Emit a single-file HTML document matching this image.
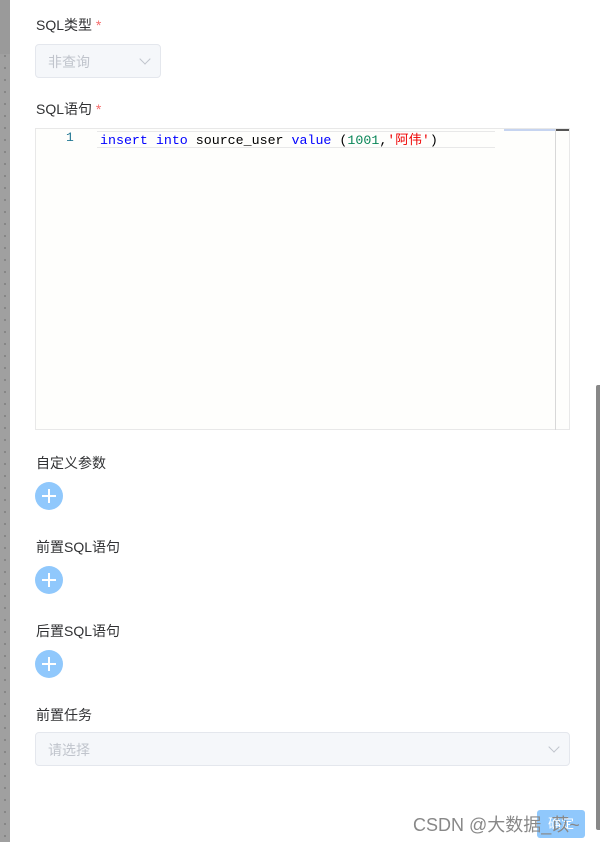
<!DOCTYPE html>
<html><head><meta charset="utf-8"><style>
body{margin:0;width:600px;height:842px;overflow:hidden;background:#fff;font-family:"Liberation Sans","Noto Sans CJK SC",sans-serif;position:relative}
.left{position:absolute;left:0;top:0;width:10px;height:842px;background:#a0a0a0;background-image:radial-gradient(#666 0.6px,transparent 0.8px);background-size:10px 12px;background-position:0 2px}
.left .top{position:absolute;left:0;top:0;width:10px;height:54px;background:#9a9a9a}
.lbl{position:absolute;left:36px;font-size:14px;color:#303133}
.req{color:#f56c6c}
.sel{position:absolute;border:1px solid #e4e7ed;background:#f5f7fa;border-radius:4px;box-sizing:border-box;color:#c0c4cc;font-size:14px}
.plus{position:absolute;left:35px;width:28px;height:28px;border-radius:50%;background:#90c8fc}
.plus:before{content:"";position:absolute;left:7px;top:13px;width:14px;height:2px;background:#fff}
.plus:after{content:"";position:absolute;left:13px;top:7px;width:2px;height:14px;background:#fff}
.chev{position:absolute;width:7px;height:7px;border-right:1px solid #c0c4cc;border-bottom:1px solid #c0c4cc;transform:rotate(45deg)}
</style></head><body>
<div class="left"><div class="top"></div></div>
<div class="lbl" style="top:15px">SQL类型 <span class="req">*</span></div>
<div class="sel" style="left:35px;top:44px;width:126px;height:34px"><span style="position:absolute;left:12px;top:7px">非查询</span><div class="chev" style="left:105px;top:10px"></div></div>
<div class="lbl" style="top:99px">SQL语句 <span class="req">*</span></div>
<div style="position:absolute;left:35px;top:128px;width:535px;height:302px;border:1px solid #e8e8e8;box-sizing:border-box;background:#fefefc">
 <div style="position:absolute;left:61px;top:2px;width:398px;height:1px;background:#e8e8e8"></div>
 <div style="position:absolute;left:61px;top:18px;width:398px;height:1px;background:#e8e8e8"></div>
 <div style="position:absolute;left:468px;top:0;width:52px;height:2px;background:#c6d4f0"></div>
 <div style="position:absolute;left:519px;top:0;width:1px;height:301px;background:#d8d8d8"></div>
 <div style="position:absolute;left:520px;top:0;width:13px;height:2px;background:#555"></div>
 <div style="position:absolute;left:30px;top:1px;font:13px 'Liberation Mono',monospace;color:#237893">1</div>
 <div style="position:absolute;left:64px;top:0px;font:13.3px 'Liberation Mono','Noto Sans CJK SC',monospace;white-space:pre;color:#000"><span style="color:#00f">insert into</span> source_user <span style="color:#00f">value</span> (<span style="color:#098658">1001</span>,<span style="color:#e00">'阿伟'</span>)</div>
</div>
<div class="lbl" style="top:453px">自定义参数</div>
<div class="plus" style="top:482px"></div>
<div class="lbl" style="top:537px">前置SQL语句</div>
<div class="plus" style="top:566px"></div>
<div class="lbl" style="top:621px">后置SQL语句</div>
<div class="plus" style="top:650px"></div>
<div class="lbl" style="top:705px">前置任务</div>
<div class="sel" style="left:35px;top:732px;width:535px;height:34px"><span style="position:absolute;left:12px;top:7px">请选择</span><div class="chev" style="left:514px;top:10px"></div></div>
<div style="position:absolute;left:596px;top:385px;width:4px;height:445px;background:#888;border-radius:2px 0 0 2px"></div>
<div style="position:absolute;left:537px;top:810px;width:48px;height:28px;background:#90c8fc;border-radius:3px;color:#fff;font-size:13px;text-align:center;line-height:28px">确定</div>
<div style="position:absolute;left:413px;top:811px;font-size:18px;color:#888;white-space:nowrap">CSDN @大数据_苡~</div>
</body></html>
